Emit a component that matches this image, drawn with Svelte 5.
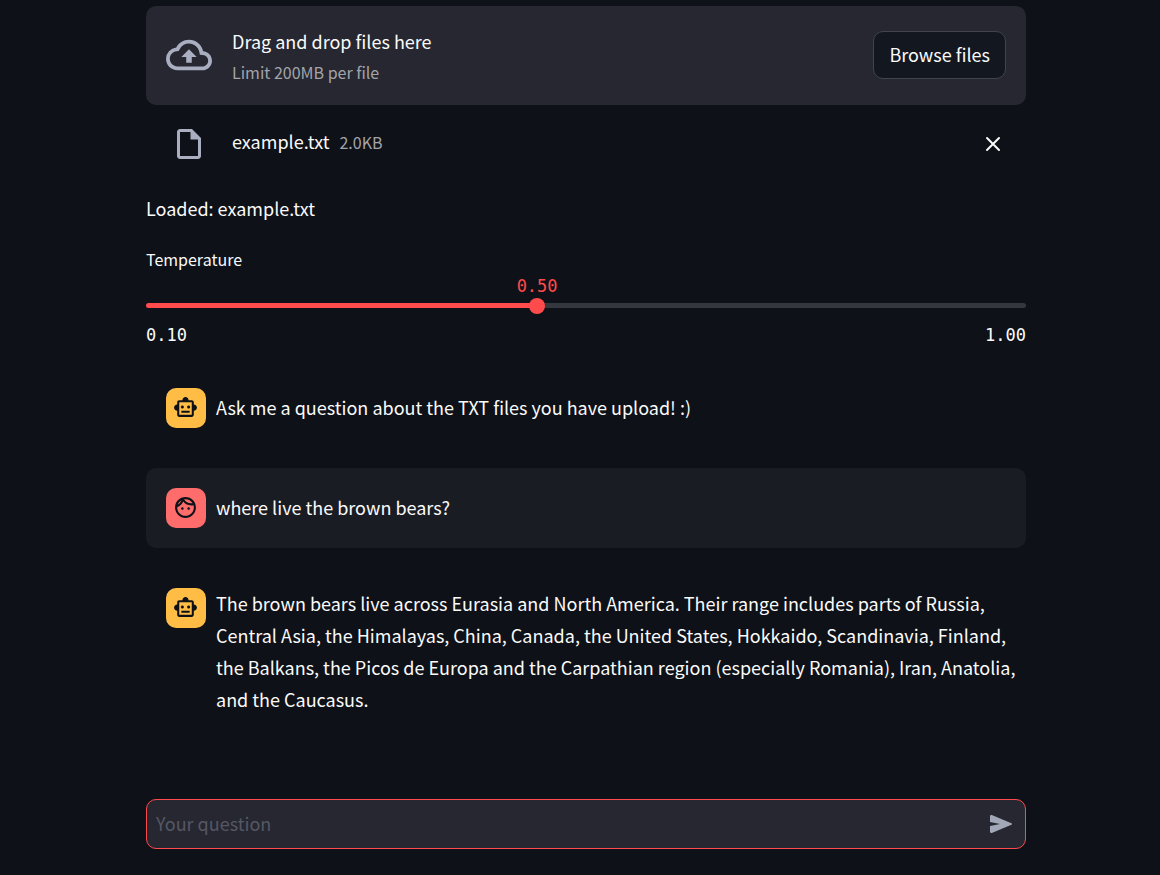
<script>
  let temperature = $state(0.5);
  let question = $state('');
  let files = $state([{ name: 'example.txt', size: '2.0KB' }]);
  const min = 0.1;
  const max = 1;
  const messages = [
    { role: 'assistant', text: 'Ask me a question about the TXT files you have upload! :)' },
    { role: 'user', text: 'where live the brown bears?' },
    {
      role: 'assistant',
      text: 'The brown bears live across Eurasia and North America. Their range includes parts of Russia, Central Asia, the Himalayas, China, Canada, the United States, Hokkaido, Scandinavia, Finland, the Balkans, the Picos de Europa and the Carpathian region (especially Romania), Iran, Anatolia, and the Caucasus.'
    }
  ];
  let percent = $derived(((temperature - min) / (max - min)) * 100);
</script>

<main>
  <section class="dropzone">
    <svg class="cloud" viewBox="0 0 24 24" aria-hidden="true"><path d="M19.35 10.04A7.49 7.49 0 0 0 12 4C9.11 4 6.6 5.64 5.35 8.04A5.994 5.994 0 0 0 0 14c0 3.31 2.69 6 6 6h13c2.76 0 5-2.24 5-5 0-2.64-2.05-4.78-4.65-4.96zM19 18H6c-2.21 0-4-1.79-4-4 0-2.05 1.53-3.76 3.56-3.97l1.07-.11.5-.95A5.469 5.469 0 0 1 12 6c2.62 0 4.88 1.86 5.39 4.43l.3 1.5 1.53.11A2.98 2.98 0 0 1 22 15c0 1.65-1.35 3-3 3zM8 13h2.55v3h2.9v-3H16l-4-4z" /></svg>
    <div class="drop-text">
      <span>Drag and drop files here</span>
      <small>Limit 200MB per file</small>
    </div>
    <button class="browse" type="button">Browse files</button>
  </section>

  {#each files as file}
    <div class="file">
      <svg class="doc" viewBox="0 0 24 24" aria-hidden="true"><path d="M14 2H6c-1.1 0-1.99.9-1.99 2L4 20c0 1.1.89 2 1.99 2H18c1.1 0 2-.9 2-2V8l-6-6zM6 20V4h7v5h5v11H6z" /></svg>
      <div class="file-name"><span>{file.name}</span><small>{file.size}</small></div>
      <button class="remove" type="button" aria-label="Remove file" onclick={() => (files = [])}>
        <svg viewBox="0 0 16 16" aria-hidden="true"><path d="M2 2l12 12M14 2L2 14" /></svg>
      </button>
    </div>
  {/each}

  <p class="loaded">Loaded: example.txt</p>

  <div class="slider">
    <label for="temperature">Temperature</label>
    <div class="value-row"><output for="temperature" style="left: {percent}%">{temperature.toFixed(2)}</output></div>
    <div class="track" style="--fill: {percent}%">
      <input id="temperature" type="range" {min} {max} step="0.01" bind:value={temperature} />
    </div>
    <div class="limits"><span>{min.toFixed(2)}</span><span>{max.toFixed(2)}</span></div>
  </div>

  <div class="chat">
    {#each messages as message}
      <article class={message.role}>
        <div class="avatar">
          {#if message.role === 'user'}
            <svg viewBox="0 0 24 24" aria-hidden="true"><path d="M10.25 13c0 .69-.56 1.25-1.25 1.25S7.75 13.69 7.75 13s.56-1.25 1.25-1.25 1.25.56 1.25 1.25zM15 11.75c-.69 0-1.25.56-1.25 1.25s.56 1.25 1.25 1.25 1.25-.56 1.25-1.25-.56-1.25-1.25-1.25zm7 .25c0 5.52-4.48 10-10 10S2 17.52 2 12 6.48 2 12 2s10 4.48 10 10zM10.66 4.12C12.06 6.44 14.6 8 17.5 8c.46 0 .91-.05 1.34-.12C17.44 5.56 14.9 4 12 4c-.46 0-.91.05-1.34.12zM4.42 9.47a8.046 8.046 0 0 0 3.66-4.44A8.046 8.046 0 0 0 4.42 9.47zM20 12c0-.78-.12-1.53-.33-2.24-.7.15-1.42.24-2.17.24a10 10 0 0 1-7.76-3.69A10.016 10.016 0 0 1 4 11.86c.01.04 0 .09 0 .14 0 4.42 3.58 8 8 8s8-3.58 8-8z" /></svg>
          {:else}
            <svg viewBox="0 0 24 24" aria-hidden="true"><path d="M20 9V7c0-1.1-.9-2-2-2h-3c0-1.66-1.34-3-3-3S9 3.34 9 5H6c-1.1 0-2 .9-2 2v2c-1.66 0-3 1.34-3 3s1.34 3 3 3v4c0 1.1.9 2 2 2h12c1.1 0 2-.9 2-2v-4c1.66 0 3-1.34 3-3s-1.34-3-3-3zm-2 10H6V7h12v12zm-9-6c-.83 0-1.5-.67-1.5-1.5S8.17 10 9 10s1.5.67 1.5 1.5S9.83 13 9 13zm7.5-1.5c0 .83-.67 1.5-1.5 1.5s-1.5-.67-1.5-1.5.67-1.5 1.5-1.5 1.5.67 1.5 1.5zM8 15h8v2H8v-2z" /></svg>
          {/if}
        </div>
        <p>{message.text}</p>
      </article>
    {/each}
  </div>

  <form class="ask" onsubmit={(event) => event.preventDefault()}>
    <input type="text" aria-label="Your question" placeholder="Your question" bind:value={question} />
    <button type="submit" aria-label="Send">
      <svg viewBox="0 0 24 20" aria-hidden="true"><path d="M1 2.4C1 1.3 1.8.7 2.8 1.1L22.4 9.2c.8.4.8 1.2 0 1.6L2.8 18.9C1.8 19.3 1 18.7 1 17.6V12l10-2L1 8z" /></svg>
    </button>
  </form>
</main>

<style>
  :global(body) {
    margin: 0;
    background: #0e1117;
  }
  main {
    box-sizing: border-box;
    padding: 6px 134px 26px 146px;
    color: #fafafa;
    font-family: 'Noto Sans CJK SC', 'Noto Sans', sans-serif;
    font-size: 18px;
    line-height: 32px;
  }
  button,
  input {
    font: inherit;
    color: inherit;
  }
  button {
    cursor: pointer;
  }
  svg {
    display: block;
    flex: none;
    fill: currentColor;
  }
  p {
    margin: 0;
  }
  small {
    color: #a3a4a9;
    font-size: 16px;
    line-height: 24px;
  }
  .dropzone {
    display: flex;
    align-items: center;
    padding: 19px 20px 21px;
    gap: 20px;
    min-height: 59px;
    border-radius: 10px;
    background: #262730;
  }
  .cloud {
    width: 46px;
    height: 46px;
    color: #a9aec1;
  }
  .drop-text {
    display: flex;
    flex: 1;
    flex-direction: column;
    gap: 3px;
  }
  .browse {
    height: 48px;
    padding: 0 15px 2px;
    border: 1px solid #41444c;
    border-radius: 10px;
    background: #131720;
  }
  .file {
    display: flex;
    align-items: center;
    gap: 25px;
    padding: 20px 20px 0 25px;
  }
  .doc {
    width: 36px;
    height: 36px;
    color: #a9aec1;
  }
  .file-name {
    display: flex;
    flex: 1;
    align-items: baseline;
    gap: 10px;
    padding-bottom: 6px;
  }
  .remove {
    padding: 5px;
    border: 0;
    background: none;
  }
  .remove svg {
    width: 16px;
    height: 16px;
    fill: none;
    stroke: currentColor;
    stroke-width: 2;
    stroke-linecap: round;
  }
  .loaded {
    padding: 29px 0 20px;
  }
  .slider label {
    display: block;
    font-size: 16px;
    line-height: 30px;
  }
  .value-row,
  .limits {
    font-family: 'DejaVu Sans Mono', monospace;
    font-size: 17px;
    line-height: 24px;
  }
  .value-row {
    position: relative;
    height: 24px;
  }
  output {
    position: absolute;
    color: #ff4b4b;
    transform: translateX(-50%);
  }
  .track {
    height: 5px;
    margin: 5px 0 15px;
    border-radius: 3px;
    background: linear-gradient(to right, #ff4b4b var(--fill), #35373f var(--fill));
  }
  .track input {
    display: block;
    width: calc(100% + 16px);
    height: 5px;
    margin: 0 -8px;
    appearance: none;
    background: none;
  }
  .track input::-webkit-slider-thumb {
    appearance: none;
    width: 16px;
    height: 16px;
    border-radius: 50%;
    background: #ff4b4b;
  }
  .limits {
    display: flex;
    justify-content: space-between;
  }
  .chat {
    display: grid;
    gap: 20px;
    padding: 21px 0 64px;
  }
  article {
    display: flex;
    gap: 10px;
    padding: 20px;
    border-radius: 10px;
  }
  article p {
    flex: 1;
    margin: -1px -16px 0 0;
  }
  .user {
    background: #1a1c24;
  }
  .user p,
  .assistant:first-child p {
    padding: 4px 0;
  }
  .avatar {
    box-sizing: border-box;
    flex: none;
    width: 40px;
    height: 40px;
    padding: 7px;
    border-radius: 10px;
    background: #ffbd45;
    color: #0e1117;
  }
  .user .avatar {
    background: #ff6c6c;
  }
  .avatar svg {
    width: 25px;
    height: 25px;
  }
  .ask {
    display: flex;
    align-items: center;
    height: 48px;
    border: 1px solid #ff4b4b;
    border-radius: 10px;
    background: #262730;
  }
  .ask input {
    flex: 1;
    min-width: 0;
    padding: 0 9px 2px;
    border: 0;
    outline: 0;
    background: none;
  }
  .ask input::placeholder {
    color: #555765;
    opacity: 1;
  }
  .ask button {
    padding: 10px 12px;
    border: 0;
    background: none;
    color: #a3a8b8;
  }
  .ask svg {
    width: 24px;
    height: 20px;
  }
</style>
